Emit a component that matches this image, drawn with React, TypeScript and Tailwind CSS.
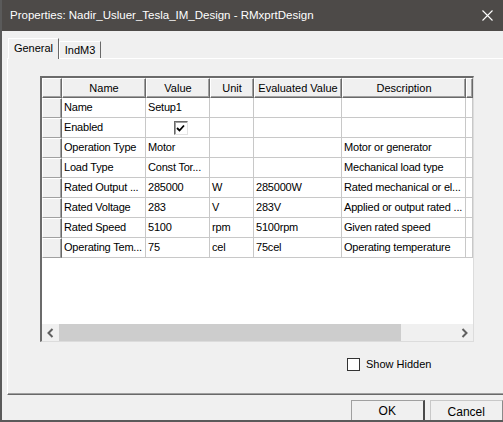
import React from "react";

// Classic Win32 property grid dialog

const cols = [
  { w: "w-[84px]", label: "Name" },
  { w: "w-[64px]", label: "Value" },
  { w: "w-[44px]", label: "Unit" },
  { w: "w-[88px]", label: "Evaluated Value" },
  { w: "w-[124px]", label: "Description" },
  { w: "w-[7px]", label: "" },
];

type Row = { name: string; value: string; unit: string; evald: string; desc: string; check?: boolean };

const rows: Row[] = [
  { name: "Name", value: "Setup1", unit: "", evald: "", desc: "" },
  { name: "Enabled", value: "", unit: "", evald: "", desc: "", check: true },
  { name: "Operation Type", value: "Motor", unit: "", evald: "", desc: "Motor or generator" },
  { name: "Load Type", value: "Const Tor...", unit: "", evald: "", desc: "Mechanical load type" },
  { name: "Rated Output ...", value: "285000", unit: "W", evald: "285000W", desc: "Rated mechanical or el..." },
  { name: "Rated Voltage", value: "283", unit: "V", evald: "283V", desc: "Applied or output rated ..." },
  { name: "Rated Speed", value: "5100", unit: "rpm", evald: "5100rpm", desc: "Given rated speed" },
  { name: "Operating Tem...", value: "75", unit: "cel", evald: "75cel", desc: "Operating temperature" },
];

const raised =
  "box-border bg-[#f0f0f0] border-t border-l border-t-white border-l-white border-r border-b border-r-[#696969] border-b-[#696969] shadow-[inset_-1px_-1px_0_#a0a0a0]";

const cell =
  "box-border h-[20px] bg-white border-r border-b border-[#c8c8c8] px-[2px] flex items-center whitespace-nowrap overflow-hidden tracking-[-0.2px]";

const Chevron = ({ dir }: { dir: "l" | "r" }) => (
  <svg width="7" height="10" viewBox="0 0 7 10">
    <path
      d={dir === "l" ? "M5.5 1 L1.5 5 L5.5 9" : "M1.5 1 L5.5 5 L1.5 9"}
      fill="none"
      stroke="#606060"
      strokeWidth="2"
    />
  </svg>
);

const CheckBox = ({ checked }: { checked?: boolean }) => (
  <div className="w-[14px] h-[14px] box-border bg-white border-t border-l border-[#696969] border-r border-b border-r-[#e3e3e3] border-b-[#e3e3e3] shadow-[inset_1px_1px_0_#a0a0a0] flex items-center justify-center">
    {checked && (
      <svg width="9" height="8" viewBox="0 0 9 8">
        <path d="M1 4 L3.5 6.5 L8 1.5" fill="none" stroke="#000" strokeWidth="1.8" />
      </svg>
    )}
  </div>
);

export default function App() {
  return (
    <div
      className="w-[503px] h-[422px] bg-[#f0f0f0] border-l-2 border-b-2 border-[#5a5a5a] overflow-hidden flex flex-col text-[11px] text-black"
      style={{ fontFamily: '"Liberation Sans", Arial, sans-serif' }}
    >
      {/* Title bar */}
      <div className="h-[31px] shrink-0 bg-[#4d4a48] flex items-center justify-between pl-[8px] pr-[10px]">
        <span className="text-white text-[11.5px]">
          Properties: Nadir_Usluer_Tesla_IM_Design - RMxprtDesign
        </span>
        <svg width="11" height="11" viewBox="0 0 11 11">
          <path d="M0.5 0.5 L10.5 10.5 M10.5 0.5 L0.5 10.5" stroke="#fff" strokeWidth="1.1" />
        </svg>
      </div>

      {/* Tabs */}
      <div className="mt-[7px] ml-[6px] flex items-end h-[20px] shrink-0">
        <div className="relative z-10 mb-[-1px] w-[51px] h-[21px] box-border bg-[#f0f0f0] border-t border-l border-white border-r border-r-[#696969] flex items-center justify-center pb-[2px]">
          General
        </div>
        <div className="w-[42px] h-[17px] box-border bg-[#f0f0f0] border-t border-l border-white border-r border-r-[#696969] flex items-center justify-center">
          IndM3
        </div>
      </div>

      {/* Tab panel */}
      <div className="ml-[5px] w-[520px] h-[337px] shrink-0 box-border border-t border-l border-white border-b border-b-[#696969] shadow-[inset_0_-1px_0_#a0a0a0] pt-[17px] pl-[32px]">
        {/* Grid */}
        <div className="w-[434px] h-[266px] box-border border-t-2 border-l-2 border-[#6b6b6b] border-r border-b border-r-[#dcdcdc] border-b-[#dcdcdc] bg-white flex flex-col">
          <div className="flex h-[20px]">
            <div className={`w-[20px] h-[20px] ${raised}`} />
            {cols.map((c, i) => (
              <div key={i} className={`${c.w} h-[20px] ${raised} flex items-center justify-center whitespace-nowrap overflow-hidden`}>
                {c.label}
              </div>
            ))}
          </div>
          {rows.map((r, i) => (
            <div key={i} className="flex h-[20px]">
              <div className="w-[20px] h-[20px] box-border bg-[#f0f0f0] border-t border-l border-white border-r border-b border-r-[#696969] border-b-[#a0a0a0] shadow-[inset_-1px_0_0_#a0a0a0]" />
              <div className={`w-[84px] ${cell}`}>{r.name}</div>
              <div className={`w-[64px] ${cell} ${r.check ? "justify-center pl-[8px]" : ""}`}>
                {r.check ? <CheckBox checked /> : r.value}
              </div>
              <div className={`w-[44px] ${cell}`}>{r.unit}</div>
              <div className={`w-[88px] ${cell}`}>{r.evald}</div>
              <div className={`w-[124px] ${cell}`}>{r.desc}</div>
              <div className={`w-[7px] ${cell}`} />
            </div>
          ))}
          <div className="flex-1" />
          {/* Horizontal scrollbar */}
          <div className="h-[17px] flex bg-[#f0f0f0]">
            <div className="w-[17px] flex items-center justify-center">
              <Chevron dir="l" />
            </div>
            <div className="w-[342px] bg-[#cdcdcd]" />
            <div className="flex-1" />
            <div className="w-[17px] flex items-center justify-center">
              <Chevron dir="r" />
            </div>
          </div>
        </div>

        {/* Show Hidden */}
        <div className="mt-[14px] ml-[307px] flex items-center gap-[6px]">
          <div className="w-[13px] h-[13px] box-border bg-white border border-[#333333]" />
          <span>Show Hidden</span>
        </div>
      </div>

      {/* Buttons */}
      <div className="mt-[5px] pl-[349px] flex gap-[5px]">
        <div className="w-[76px] h-[23px] box-border bg-[#f0f0f0] border border-[#a0a0a0] border-r-2 border-b-2 border-r-[#4a4a4a] border-b-[#4a4a4a] flex items-center justify-center text-[12px]">
          OK
        </div>
        <div className="w-[76px] h-[23px] box-border bg-[#f0f0f0] border border-[#c8c8c8] border-r-[#8a8a8a] flex items-center justify-center text-[12px]">
          Cancel
        </div>
      </div>
    </div>
  );
}
